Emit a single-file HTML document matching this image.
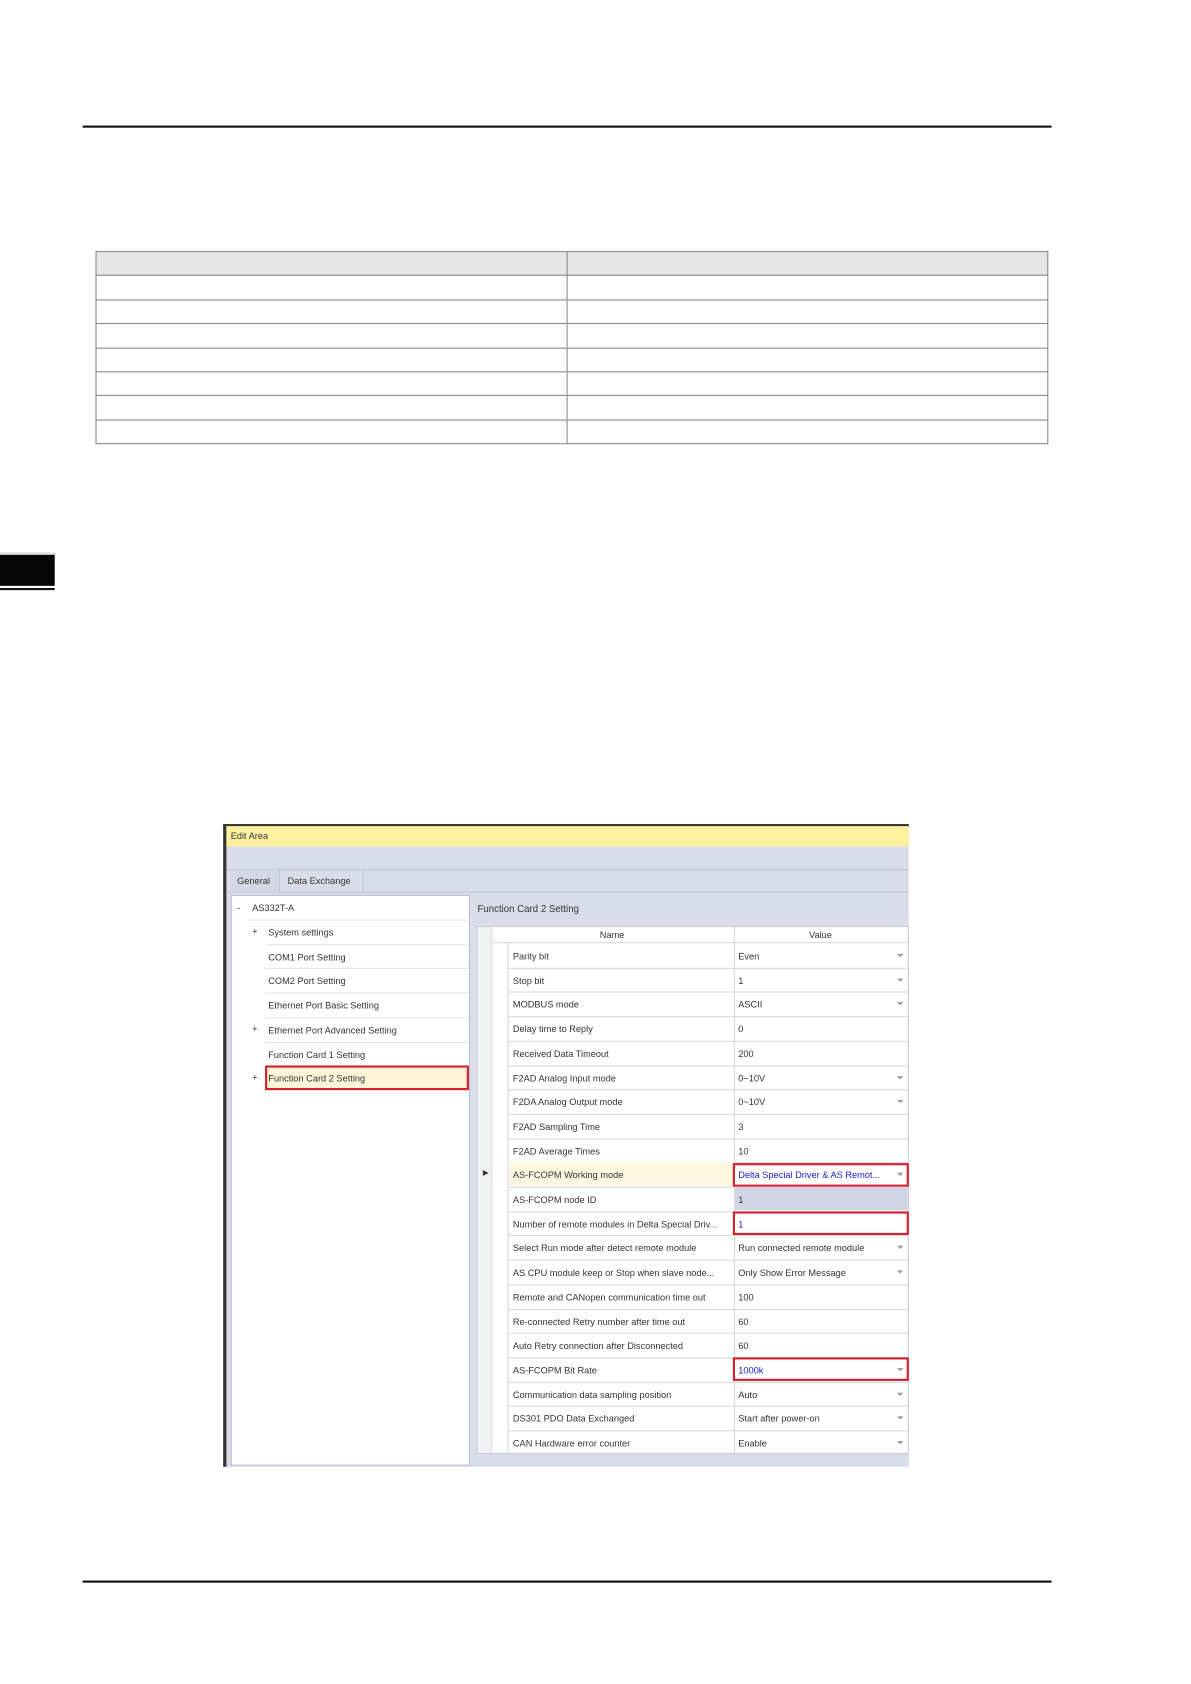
<!DOCTYPE html>
<html><head><meta charset="utf-8"><style>
*{margin:0;padding:0;box-sizing:border-box}
body{width:1191px;height:1684px;background:#fff;overflow:hidden;font-family:"Liberation Sans",sans-serif}
#w{position:absolute;left:0;top:0;width:1110px;height:1569px;transform:scale(1.073);transform-origin:0 0}
.a{position:absolute}
.t{font-size:8.6px;color:#333;white-space:nowrap}
table.d{position:absolute;left:89px;top:234px;width:888px;border-collapse:collapse}
table.d td{border:1px solid #888;height:22.4px}
</style></head><body><div id="w">
<div class="a" style="left:77px;top:117px;width:903px;height:2px;background:#111"></div>
<table class="d">
<tr><td style="width:439px;background:#e6e6e6"></td><td style="background:#e6e6e6"></td></tr>
<tr><td></td><td></td></tr><tr><td></td><td></td></tr><tr><td></td><td></td></tr>
<tr><td></td><td></td></tr><tr><td></td><td></td></tr><tr><td></td><td></td></tr><tr><td></td><td></td></tr>
</table>
<div class="a" style="left:0;top:515px;width:52px;height:1px;background:#ccc"></div>
<div class="a" style="left:0;top:517px;width:51px;height:29px;background:#050505"></div>
<div class="a" style="left:0;top:548px;width:51px;height:2px;background:#111"></div>
<div class="a" style="left:77px;top:1473px;width:903px;height:1.5px;background:#111"></div>

<div class="a" style="left:208px;top:768px;width:639px;height:599px;background:#d9dde9;border-left:3px solid #333;border-top:2px solid #333"></div>
<div class="a" style="left:211px;top:770px;width:636px;height:19px;background:#fdf1a0"></div>
<div class="a t" style="left:215px;top:774px">Edit Area</div>
<div class="a" style="left:211px;top:810px;width:636px;height:1px;background:#c2c7d2"></div>
<div class="a" style="left:211px;top:831px;width:636px;height:1px;background:#c2c7d2"></div>
<div class="a" style="left:215px;top:811px;width:46px;height:21px;border-right:1px solid #c2c7d2;background:#d3d8e4"></div>
<div class="a t" style="left:221px;top:816px">General</div>
<div class="a" style="left:261px;top:811px;width:78px;height:21px;border-right:1px solid #c2c7d2"></div>
<div class="a t" style="left:268px;top:816px">Data Exchange</div>
<div class="a" style="left:215px;top:834px;width:223px;height:532px;background:#fff;border:1px solid #b8bdc8"></div>
<div class="a t" style="left:221px;top:841px">-</div>
<div class="a t" style="left:235px;top:841px">AS332T-A</div>
<div class="a" style="left:231px;top:857px;width:206px;height:1px;background:#e2e2e2"></div>
<div id="tree"></div>
<div class="a t" style="left:445px;top:842px;font-size:9px">Function Card 2 Setting</div>
<div class="a" style="left:444px;top:863px;width:403px;height:492px;background:#fff;border:1px solid #c6cad3"></div>
<div class="a" style="left:445px;top:864px;width:14px;height:490px;background:#f0f1f4;border-right:1px solid #dcdfe5"></div>
<div class="a" style="left:459px;top:879px;width:15px;height:475px;border-right:1px solid #d6d8dc"></div>
<div class="a" style="left:459px;top:878px;width:387px;height:1px;background:#d6d8dc"></div>
<div class="a" style="left:684px;top:864px;width:1px;height:490px;background:#d6d8dc"></div>
<div class="a t" style="left:559px;top:866px">Name</div>
<div class="a t" style="left:754px;top:866px">Value</div>
<div class="a" style="left:444px;top:1355px;width:403px;height:12px;background:#d9dde9"></div>
<div id="grid"></div>
</div>
<script>
var tr=[["+","System settings"],["","COM1 Port Setting"],["","COM2 Port Setting"],["","Ethernet Port Basic Setting"],["+","Ethernet Port Advanced Setting"],["","Function Card 1 Setting"],["+","Function Card 2 Setting"]];
var h='';
tr.forEach(function(r,i){var y=857+i*22.7;
 if(i==6)h+='<div class="a" style="left:247px;top:993px;width:190px;height:23px;background:#fdf4d8;border:2px solid #d4202c"></div>';
 h+='<div class="a t" style="left:235px;top:'+(y+6)+'px">'+r[0]+'</div><div class="a t" style="left:250px;top:'+(y+7)+'px">'+r[1]+'</div>';
 if(i<6)h+='<div class="a" style="left:247px;top:'+(y+22.7)+'px;width:190px;height:1px;background:#e2e2e2"></div>';});
document.getElementById('tree').innerHTML=h;
var g=[["Parity bit","Even",1],["Stop bit","1",1],["MODBUS mode","ASCII",1],["Delay time to Reply","0",0],["Received Data Timeout","200",0],["F2AD Analog Input mode","0~10V",1],["F2DA Analog Output mode","0~10V",1],["F2AD Sampling Time","3",0],["F2AD Average Times","10",0],["AS-FCOPM Working mode","Delta Special Driver &amp; AS Remot...",1],["AS-FCOPM node ID","1",0],["Number of remote modules in Delta Special Driv...","1",0],["Select Run mode after detect remote module","Run connected remote module",1],["AS CPU module keep or Stop when slave node...","Only Show Error Message",1],["Remote and CANopen communication time out","100",0],["Re-connected Retry number after time out","60",0],["Auto Retry connection after Disconnected","60",0],["AS-FCOPM Bit Rate","1000k",1],["Communication data sampling position","Auto",1],["DS301 PDO Data Exchanged","Start after power-on",1],["CAN Hardware error counter","Enable",1]];
h='';
g.forEach(function(r,i){var y=879+i*22.7;
 if(i==9)h+='<div class="a" style="left:475px;top:'+y+'px;width:209px;height:22px;background:#fdf7df"></div><div class="a t" style="left:450px;top:'+(y+6)+'px;font-size:7px">&#9654;</div>';
 if(i==10)h+='<div class="a" style="left:685px;top:'+y+'px;width:161px;height:22px;background:#cfd5e5"></div>';
 var blue=(i==9||i==11||i==17);
 h+='<div class="a t" style="left:478px;top:'+(y+7)+'px">'+r[0]+'</div><div class="a t" style="left:688px;top:'+(y+7)+'px;color:'+(blue?'#1a1acc':'#333')+'">'+r[1]+'</div>';
 if(r[2])h+='<div class="a" style="left:836px;top:'+(y+10)+'px;width:0;height:0;border-left:3px solid transparent;border-right:3px solid transparent;border-top:3px solid #999"></div>';
 h+='<div class="a" style="left:474px;top:'+(y+22.7)+'px;width:372px;height:1px;background:#d6d8dc"></div>';
 if(blue)h+='<div class="a" style="left:683px;top:'+(y+0.5)+'px;width:164px;height:22px;border:2px solid #d4202c"></div>';});
document.getElementById('grid').innerHTML=h;
</script>
</body></html>
